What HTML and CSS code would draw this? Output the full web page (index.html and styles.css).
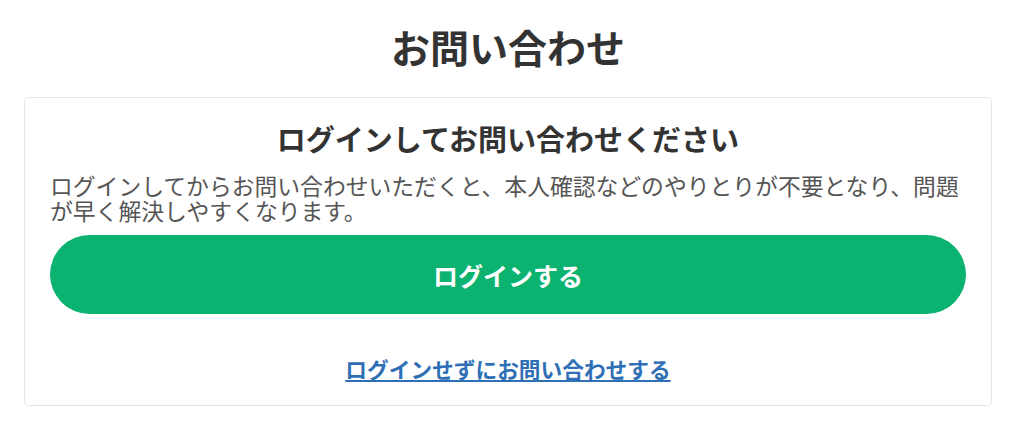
FILE: index.html
```html
<!doctype html>
<html lang="ja">
  <head>
    <meta charset="utf-8" />
    <meta name="viewport" content="width=device-width, initial-scale=1" />
    <title>お問い合わせ</title>
    <link rel="stylesheet" href="styles.css">
  </head>
  <body>
    <div class="container">
      <h1 class="page-title">お問い合わせ</h1>
      <section class="card">
        <h2>ログインしてお問い合わせください</h2>
        <p>
          ログインしてからお問い合わせいただくと、本人確認などのやりとりが不要となり、問題が早く解決しやすくなります。
        </p>
        <button type="button" class="login-btn">ログインする</button>
        <a class="guest-link" href="#">ログインせずにお問い合わせする</a>
      </section>
    </div>
  </body>
</html>
```

FILE: styles.css
```css
body {
  margin: 0;
  background: #fff;
  color: #333;
  font-family: "Noto Sans CJK JP", "Noto Sans", sans-serif;
}
.container {
  padding: 24px 32px 0 24px;
}
.page-title {
  margin: 0;
  font-size: 39px;
  line-height: 45px;
  font-weight: 700;
  text-align: center;
  color: #333;
}
.card {
  margin-top: 28px;
  padding: 20px 25px 21px;
  border: 1px solid #e4e4e4;
  border-radius: 5px;
  display: flex;
  flex-direction: column;
  h2 {
    margin: 0;
    font-size: 29px;
    line-height: 40px;
    font-weight: 700;
    text-align: center;
    color: #333;
  }
  p {
    margin: 15px 0 0;
    font-size: 22.8px;
    line-height: 25px;
    color: #555;
  }
}
.login-btn {
  margin-top: 12px;
  height: 79px;
  border: none;
  border-radius: 40px;
  background: #0cb270;
  color: #fff;
  font-family: inherit;
  font-size: 25px;
  font-weight: 700;
  cursor: pointer;
}
.guest-link {
  margin-top: 40px;
  align-self: center;
  font-size: 21.7px;
  line-height: 30px;
  font-weight: 700;
  color: #2f6fb6;
}
```
